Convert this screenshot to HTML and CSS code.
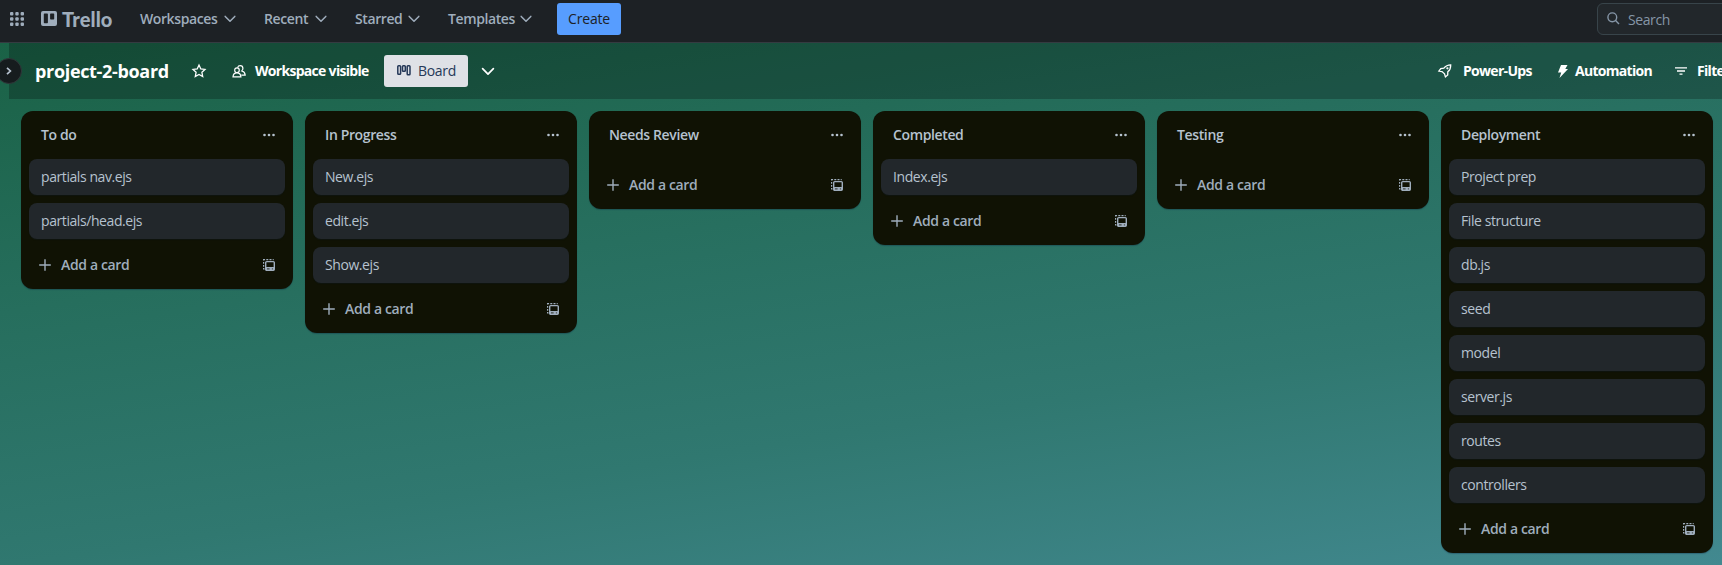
FILE: index.html
```html
<!DOCTYPE html>
<html lang="en">
<head>
<meta charset="utf-8">
<title>project-2-board | Trello</title>
<link rel="stylesheet" href="styles.css">
</head>
<body>
<svg class="sprite" aria-hidden="true">
  <symbol id="chevron" viewBox="0 0 12 8"><path d="M1.2 1.4 6 6.3l4.800-4.900" fill="none" stroke="currentColor" stroke-width="1.500" stroke-linecap="round" stroke-linejoin="round"/></symbol>
  <symbol id="dots" viewBox="0 0 12 4"><circle cx="1.500" cy="2" r="1.300"/><circle cx="6" cy="2" r="1.300"/><circle cx="10.500" cy="2" r="1.300"/></symbol>
  <symbol id="plus" viewBox="0 0 12 12"><path d="M6 .2v11.600M.2 6h11.600" fill="none" stroke="currentColor" stroke-width="1.400"/></symbol>
  <symbol id="template" viewBox="0 0 12 12"><path d="M.6 1.600V.6h1.500M3.300.6h2M6.500.6h2M9.700.6h1M.6 3v1.700M.6 6v1.700M.6 9v1h1" fill="none" stroke="currentColor" stroke-width="1.200"/><rect x="2.700" y="2.600" width="8.600" height="8.600" rx="1" fill="none" stroke="currentColor" stroke-width="1.400"/><path d="M2.700 8h8.600v3.200H2.700z"/><path d="M4 9.900h2.600M8.900 9.900h1" stroke="#101204" stroke-width=".8"/></symbol>
</svg>

<header class="nav">
  <svg class="apps" viewBox="0 0 14 14"><rect width="3.400" height="3.400" rx="1"/><rect x="5.300" width="3.400" height="3.400" rx="1"/><rect x="10.600" width="3.400" height="3.400" rx="1"/><rect y="5.300" width="3.400" height="3.400" rx="1"/><rect x="5.300" y="5.300" width="3.400" height="3.400" rx="1"/><rect x="10.600" y="5.300" width="3.400" height="3.400" rx="1"/><rect y="10.600" width="3.400" height="3.400" rx="1"/><rect x="5.300" y="10.600" width="3.400" height="3.400" rx="1"/><rect x="10.600" y="10.600" width="3.400" height="3.400" rx="1"/></svg>
  <div class="logo">
    <svg viewBox="0 0 16 15"><path fill-rule="evenodd" d="M2 0h12a2 2 0 0 1 2 2v11a2 2 0 0 1-2 2H2a2 2 0 0 1-2-2V2a2 2 0 0 1 2-2zm1.500 2.500a.7.7 0 0 0-.7.7v8.300c0 .4.300.7.7.7h2.700c.4 0 .7-.3.7-.7V3.200a.7.7 0 0 0-.7-.7zm6.300 0a.7.7 0 0 0-.7.7v4.600c0 .4.300.7.700.7h2.700c.4 0 .7-.3.7-.7V3.200a.7.7 0 0 0-.7-.7z"/></svg>
    <span>Trello</span>
  </div>
  <nav class="menus">
    <span class="menu workspaces"><b>Workspaces</b><svg><use href="#chevron"/></svg></span>
    <span class="menu recent"><b>Recent</b><svg><use href="#chevron"/></svg></span>
    <span class="menu starred"><b>Starred</b><svg><use href="#chevron"/></svg></span>
    <span class="menu templates"><b>Templates</b><svg><use href="#chevron"/></svg></span>
  </nav>
  <button class="create">Create</button>
  <div class="search"><svg viewBox="0 0 13 13"><circle cx="5.300" cy="5.300" r="4.400"/><path d="m8.600 8.600 3.400 3.400"/></svg><span>Search</span></div>
</header>

<main class="workspace">
  <div class="board-bar">
    <span class="expand"><svg viewBox="0 0 6 8"><path d="m1 .8 3.400 3.200L1 7.200"/></svg></span>
    <h1>project-2-board</h1>
    <svg class="star" viewBox="0 0 14 14"><path d="m7 1 1.800 3.900 4.200.5-3.100 2.900.8 4.300L7 10.500l-3.700 2.100.8-4.300L1 5.400l4.200-.5z"/></svg>
    <div class="visibility">
      <svg viewBox="0 0 14 13"><path d="M1 11.800c.2-2.600 1.700-3.900 3.900-3.900s3.800 1.300 4 3.900z"/><circle cx="5" cy="5.200" r="2.300"/><path d="M5.600 2.600C6 1.300 7 .7 8.200.7c1.600 0 2.700 1.200 2.700 2.800 0 1-.5 1.900-1.100 2.400 2 .6 3.300 2.200 3.400 4.300H9.300"/></svg>
      <b>Workspace visible</b>
    </div>
    <div class="view"><svg viewBox="0 0 14 11"><rect x=".8" y=".8" width="2.800" height="8.400" rx=".8"/><rect x="5.500" y=".8" width="2.800" height="5.400" rx=".8"/><rect x="10.200" y=".8" width="2.800" height="9" rx=".8"/></svg><span>Board</span></div>
    <svg class="more-views"><use href="#chevron"/></svg>
    <div class="actions">
      <div class="action power"><svg viewBox="0 0 14 14"><path d="M12.700.9c-3.200 0-5.200 1.200-6.800 3.300L2.800 4.500.9 7l3.100.5 2.500 2.400.9 3 2.300-1.900.1-3.200c2-1.700 3-3.900 2.900-6.900z"/><circle cx="9.400" cy="4.300" r=".5"/></svg><b>Power-Ups</b></div>
      <div class="action auto"><svg viewBox="0 0 10 13"><path d="M3 0h6.500L7.300 4H10L1.500 13l1.700-5.500H0z"/></svg><b>Automation</b></div>
      <div class="action filters"><svg viewBox="0 0 12 8"><path d="M0 .8h12M2 4h8M4.500 7.200h3"/></svg><b>Filters</b></div>
    </div>
  </div>

  <div class="lists" id="lists"></div>
</main>
<script src="board.js"></script>
</body>
</html>
```
FILE: board.js
```js
const lists = [
  ["To do", ["partials nav.ejs", "partials/head.ejs"]],
  ["In Progress", ["New.ejs", "edit.ejs", "Show.ejs"]],
  ["Needs Review", []],
  ["Completed", ["Index.ejs"]],
  ["Testing", []],
  ["Deployment", ["Project prep", "File structure", "db.js", "seed", "model", "server.js", "routes", "controllers"]]
];
document.getElementById("lists").innerHTML = lists.map(([title, cards]) => `
  <section class="list">
    <div class="list-head"><h2>${title}</h2><svg class="dots"><use href="#dots"/></svg></div>
    <div class="cards">${cards.map(c => `<div class="card"><span>${c}</span></div>`).join("")}</div>
    <div class="list-foot"><svg class="plus"><use href="#plus"/></svg><span>Add a card</span><svg class="template"><use href="#template"/></svg></div>
  </section>`).join("");
```
FILE: styles.css
```css
* { box-sizing: border-box; }
body {
  margin: 0;
  width: 100%;
  height: 565px;
  overflow: hidden;
  display: flex;
  flex-direction: column;
  font: 14px/20px "Open Sans", "Noto Sans", sans-serif;
  color: #b6c2cf;
  background: #1d2125;
}
svg { display: block; flex: none; fill: currentColor; overflow: visible; }
.sprite { width: 0; height: 0; position: absolute; }
b { font-weight: 600; white-space: nowrap; }

.nav {
  height: 43px;
  flex: none;
  display: flex;
  align-items: center;
  padding: 0 0 5px 10px;
  border-bottom: 1px solid #343b41;
  color: #9fadbc;
}
.apps { width: 14px; height: 14px; }
.logo { display: flex; align-items: center; gap: 5px; margin-left: 17px; width: 99px; }
.logo svg { width: 16px; height: 15px; }
.logo span { font: 900 20px/22px Lato, sans-serif; letter-spacing: .1px; padding-top: 1px; }
.menus { display: flex; }
.menu { display: flex; align-items: center; }
.menu b { letter-spacing: -.4px; flex: 1; }
.menu svg { width: 12px; height: 8px; }
.workspaces { width: 96px; margin-right: 28px; }
.recent { width: 63px; margin-right: 28px; }
.starred { width: 65px; margin-right: 28px; }
.templates { width: 84px; }
.create {
  width: 64px; height: 32px; margin-left: 25px; padding: 0;
  border: 0; border-radius: 3px; background: #579dff; color: #1d2125;
  font: 14px/20px "Open Sans", sans-serif; letter-spacing: -.2px;
}
.search {
  width: 180px; height: 32px; margin: 0 -55px 0 auto; padding-left: 9px;
  display: flex; flex: none; align-items: center; gap: 8px;
  border: 1px solid #38444a; border-radius: 6px; background: #22272b; color: #8696a7;
}
.search svg { width: 13px; height: 13px; fill: none; stroke: currentColor; stroke-width: 1.4; }
.search span { letter-spacing: -.4px; padding-top: 2px; }

.workspace {
  flex: 1; min-height: 0;
  background: linear-gradient(171deg, #1a6246 0%, #266e5d 34%, #307870 66%, #428990 100%);
}
.board-bar {
  position: relative;
  height: 56px; margin-left: 9px; padding-left: 26px;
  display: flex; align-items: center;
  background: rgba(0, 0, 0, .24); color: #fff;
}
.expand {
  position: absolute; left: -13px; top: 15px;
  width: 26px; height: 26px; border-radius: 50%;
  border: 1px solid #30373a; background: #161c1e; color: #b6c2cf;
  display: grid; place-items: center;
}
.expand svg { width: 6px; height: 8px; fill: none; stroke: currentColor; stroke-width: 1.7; }
h1 { margin: 0; width: 157px; font-size: 18px; line-height: 24px; font-weight: 700; letter-spacing: -.33px; white-space: nowrap; }
.star { width: 14px; height: 14px; fill: none; stroke: currentColor; stroke-width: 1.3; }
.visibility { display: flex; align-items: center; gap: 9px; margin-left: 26px; width: 152px; }
.visibility svg { width: 14px; height: 13px; fill: none; stroke: currentColor; stroke-width: 1.2; }
.visibility b, .action b { font-weight: 700; letter-spacing: -.7px; }
.view {
  width: 84px; height: 32px; padding-left: 13px;
  display: flex; align-items: center; gap: 7px;
  border-radius: 3px; background: #dfe1e6; color: #253858;
}
.view span { letter-spacing: -.3px; }
.view svg { width: 14px; height: 11px; fill: none; stroke: currentColor; stroke-width: 1.5; margin-top: -2px; }
.more-views { width: 14px; height: 9px; margin-left: 13px; }
.actions { display: flex; margin-left: auto; margin-right: -50px; }
.action { display: flex; align-items: center; flex: none; }
.power { width: 120px; gap: 11px; }
.auto { width: 117px; gap: 7px; }
.filters { width: 97px; gap: 10px; }
.power svg { width: 14px; height: 14px; fill: none; stroke: currentColor; stroke-width: 1.3; }
.auto svg { width: 10px; height: 13px; }
.filters svg { width: 12px; height: 8px; fill: none; stroke: currentColor; stroke-width: 1.3; }

.lists { display: flex; align-items: flex-start; gap: 12px; padding: 12px 0 0 21px; }
.list { width: 272px; flex: none; border-radius: 12px; background: #101204; box-shadow: 0 1px 1px rgba(9, 30, 66, .3); }
.list-head { height: 48px; padding: 0 18px 0 20px; display: flex; align-items: center; justify-content: space-between; }
h2 { margin: 0; font-size: 14px; font-weight: 600; line-height: 20px; letter-spacing: -.37px; }
.dots { width: 12px; height: 4px; }
.cards { padding: 0 8px; display: flex; flex-direction: column; gap: 8px; }
.card { height: 36px; padding: 8px 12px; border-radius: 8px; background: #22272b; box-shadow: 0 1px 1px #091e4230; letter-spacing: -.42px; }
.list-foot { height: 50px; padding: 2px 18px 0 18px; display: flex; align-items: center; color: #9fadbc; }
.list-foot span { flex: 1; margin-left: 10px; font-weight: 600; letter-spacing: -.35px; }
.plus, .template { width: 12px; height: 12px; }
```
